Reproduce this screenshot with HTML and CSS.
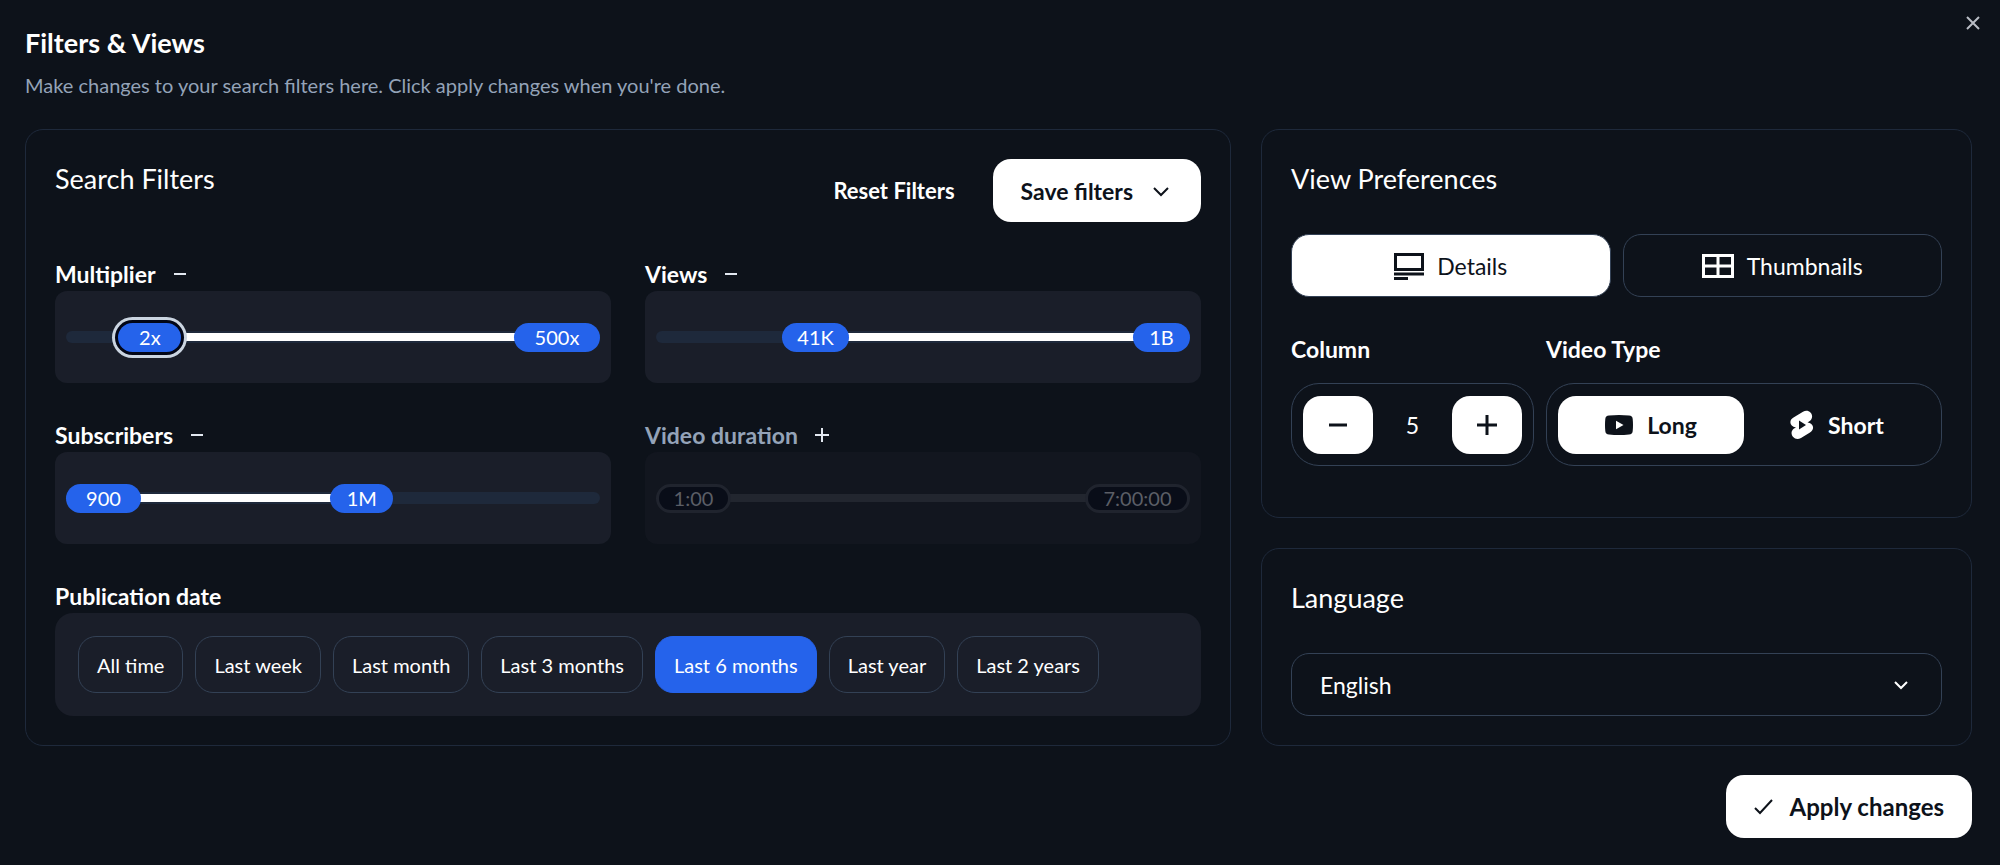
FILE: index.html
```html
<!DOCTYPE html>
<html lang="en">
<head>
<meta charset="utf-8">
<meta name="viewport" content="width=device-width, initial-scale=1">
<title>Filters &amp; Views</title>
<link rel="stylesheet" href="styles.css">
</head>
<body>
<main class="dialog">
  <button class="close" type="button" aria-label="Close">
    <svg viewBox="0 0 14 14" width="14" height="14" fill="none" stroke="currentColor" stroke-width="2"><path d="M1 1l12 12M13 1L1 13"/></svg>
  </button>

  <header class="dialog-header">
    <h1 class="title">Filters &amp; Views</h1>
    <p class="description">Make changes to your search filters here. Click apply changes when you're done.</p>
  </header>

  <div class="columns">
    <section class="card">
      <div class="card-top">
        <h2 class="card-title">Search Filters</h2>
        <div class="actions">
          <button class="btn btn-ghost" type="button">Reset Filters</button>
          <button class="btn btn-solid" type="button">Save filters
            <svg viewBox="0 0 24 24" width="24" height="24" fill="none" stroke="currentColor" stroke-width="2"><path d="M5 9l7 7 7-7"/></svg>
          </button>
        </div>
      </div>

      <div class="filters">
        <div class="filter">
          <div class="filter-head"><h3 class="label">Multiplier</h3>
            <button class="toggle" type="button" aria-label="Disable multiplier"><svg viewBox="0 0 14 14" width="14" height="14" stroke="currentColor" stroke-width="2"><path d="M1 7h12"/></svg></button></div>
          <div class="panel"><div class="slider">
            <span class="range" style="left:15%;right:8%"></span>
            <output class="thumb w-xs focused" style="left:9.8%">2x</output>
            <output class="thumb w-lg" style="right:0">500x</output>
            <input class="native" type="range" aria-label="Minimum multiplier"><input class="native" type="range" aria-label="Maximum multiplier">
          </div></div>
        </div>

        <div class="filter">
          <div class="filter-head"><h3 class="label">Views</h3>
            <button class="toggle" type="button" aria-label="Disable views"><svg viewBox="0 0 14 14" width="14" height="14" stroke="currentColor" stroke-width="2"><path d="M1 7h12"/></svg></button></div>
          <div class="panel"><div class="slider">
            <span class="range" style="left:30%;right:6%"></span>
            <output class="thumb w-sm" style="left:23.6%">41K</output>
            <output class="thumb w-xxs" style="right:0">1B</output>
            <input class="native" type="range" aria-label="Minimum views"><input class="native" type="range" aria-label="Maximum views">
          </div></div>
        </div>

        <div class="filter">
          <div class="filter-head"><h3 class="label">Subscribers</h3>
            <button class="toggle" type="button" aria-label="Disable subscribers"><svg viewBox="0 0 14 14" width="14" height="14" stroke="currentColor" stroke-width="2"><path d="M1 7h12"/></svg></button></div>
          <div class="panel"><div class="slider">
            <span class="range" style="left:7%;right:44%"></span>
            <output class="thumb w-md" style="left:0">900</output>
            <output class="thumb w-xs" style="left:49.5%">1M</output>
            <input class="native" type="range" aria-label="Minimum subscribers"><input class="native" type="range" aria-label="Maximum subscribers">
          </div></div>
        </div>

        <div class="filter is-off">
          <div class="filter-head"><h3 class="label">Video duration</h3>
            <button class="toggle" type="button" aria-label="Enable video duration"><svg viewBox="0 0 14 14" width="14" height="14" stroke="currentColor" stroke-width="2"><path d="M0 7h14M7 0v14"/></svg></button></div>
          <div class="panel"><div class="slider">
            <span class="range" style="left:7%;right:10%"></span>
            <output class="thumb w-md" style="left:0">1:00</output>
            <output class="thumb w-xl" style="right:0">7:00:00</output>
            <input class="native" type="range" aria-label="Minimum duration" disabled><input class="native" type="range" aria-label="Maximum duration" disabled>
          </div></div>
        </div>
      </div>

      <div class="dates">
        <div class="filter-head"><h3 class="label">Publication date</h3></div>
        <div class="chips">
          <button class="chip" type="button">All time</button>
          <button class="chip" type="button">Last week</button>
          <button class="chip" type="button">Last month</button>
          <button class="chip" type="button">Last 3 months</button>
          <button class="chip chip-active" type="button" aria-pressed="true">Last 6 months</button>
          <button class="chip" type="button">Last year</button>
          <button class="chip" type="button">Last 2 years</button>
        </div>
      </div>
    </section>

    <div class="side">
      <section class="card card-view">
        <h2 class="card-title">View Preferences</h2>
        <div class="modes">
          <button class="mode mode-active" type="button" aria-pressed="true">
            <svg viewBox="0 0 30 28" width="30" height="28" fill="none" stroke="currentColor" stroke-width="3"><path d="M1.500 2.500h27v15h-27zM0 22h30M0 26.500h14"/></svg>
            Details
          </button>
          <button class="mode" type="button">
            <svg viewBox="0 0 32 24" width="32" height="24" fill="none" stroke="currentColor" stroke-width="3"><path d="M1.500 1.500h29v21h-29zM16 1.500v21M1.500 12h29"/></svg>
            Thumbnails
          </button>
        </div>
        <div class="options">
          <div class="option">
            <h3 class="label" id="col-label">Column</h3>
            <div class="box stepper" role="group" aria-labelledby="col-label">
              <button class="step" type="button" aria-label="Fewer columns"><svg viewBox="0 0 20 20" width="20" height="20" stroke="currentColor" stroke-width="3"><path d="M1 10h18"/></svg></button>
              <output class="count">5</output>
              <button class="step" type="button" aria-label="More columns"><svg viewBox="0 0 20 20" width="20" height="20" stroke="currentColor" stroke-width="3"><path d="M0 10h20M10 0v20"/></svg></button>
            </div>
          </div>
          <div class="option">
            <h3 class="label" id="type-label">Video Type</h3>
            <div class="box types" role="group" aria-labelledby="type-label">
              <button class="type type-active" type="button" aria-pressed="true">
                <svg viewBox="0 0 28 20" width="28" height="20"><path fill="currentColor" fill-rule="evenodd" d="M4 .5Q14-.5 24 .5q3.500.3 3.700 3.500.6 6 0 12-.2 3.200-3.700 3.500-10 1-20 0-3.500-.3-3.700-3.500-.6-6 0-12Q.5.800 4 .5zM11 5.800v8.400l7.500-4.200z"/></svg>
                Long
              </button>
              <button class="type" type="button">
                <svg viewBox="0 0 24 30" width="24" height="30"><path fill="currentColor" fill-rule="evenodd" d="M13 1.700C20-2 26 7 19 11.500L17.500 12.500C25 14 24 20 20 22.500L11 28C4 32 -2 23 4 18.500L6 17.500C-1 16-1 10 3.500 7.500zM9 10.500v9l7-4.500z"/></svg>
                Short
              </button>
            </div>
          </div>
        </div>
      </section>

      <section class="card">
        <h2 class="card-title"><label for="language">Language</label></h2>
        <div class="select-wrap">
          <select class="select" id="language"><option>English</option></select>
          <svg class="select-arrow" viewBox="0 0 24 24" width="24" height="24" fill="none" stroke="currentColor" stroke-width="2"><path d="M6 9l6 6 6-6"/></svg>
        </div>
      </section>
    </div>
  </div>

  <footer class="dialog-footer">
    <button class="btn btn-solid btn-apply" type="button">
      <svg viewBox="0 0 20 20" width="20" height="20" fill="none" stroke="currentColor" stroke-width="2"><path d="M1 11l5 5L18 3"/></svg>
      Apply changes
    </button>
  </footer>
</main>
</body>
</html>
```

FILE: styles.css
```css
* { box-sizing: border-box; }

body {
  margin: 0;
  background: #0d121a;
  color: #fff;
  font-family: Lato, "Open Sans", sans-serif;
  font-size: 22px;
  line-height: 28px;
}

h1, h2, h3, p { margin: 0; }

button, select {
  font: inherit;
  color: inherit;
  background: none;
  border: 0;
  padding: 0;
  cursor: pointer;
}

svg { display: block; flex: none; }

.dialog { position: relative; padding: 24px 28px 27px 25px; }

.close { position: absolute; top: 16px; right: 20px; color: #b9bdc5; }

.dialog-header { margin-bottom: 29px; }
.title { font-size: 27px; line-height: 38px; font-weight: 700; }
.description { margin-top: 9px; font-size: 20px; line-height: 29px; color: #94a3b8; }

.columns { display: grid; grid-template-columns: minmax(0, 1206fr) minmax(0, 711fr); gap: 30px; }
.side { display: flex; flex-direction: column; gap: 30px; }

.card { border: 1px solid #1e293b; border-radius: 18px; padding: 29px; }
.card-view { flex: 1; }
.card-top { display: flex; justify-content: space-between; }
.card-title { font-size: 27px; line-height: 40px; font-weight: 400; }

.actions { display: flex; gap: 10px; }
.btn {
  display: flex;
  align-items: center;
  justify-content: center;
  height: 63px;
  padding: 0 28px;
  border-radius: 18px;
  font-size: 23px;
  font-weight: 700;
}
.btn-ghost { font-size: 22px; }
.btn-solid { background: #fff; color: #0d121a; gap: 16px; }

.filters { display: grid; grid-template-columns: 1fr 1fr; gap: 34px; margin-top: 34px; }
.filter-head { display: flex; align-items: center; gap: 17px; height: 35px; }
.label { font-size: 23px; line-height: 28px; font-weight: 700; }
.toggle { padding: 4px 0; color: #e2e8f0; }

.panel { height: 92px; padding: 40px 11px; border-radius: 12px; background: #1a1e29; }
.slider { position: relative; height: 12px; border-radius: 6px; background: #1e293b; }
.range { position: absolute; top: 2px; bottom: 2px; background: #fff; }
.thumb {
  position: absolute;
  top: -8px;
  height: 29px;
  border-radius: 15px;
  background: #2563eb;
  font-size: 20px;
  line-height: 28px;
  text-align: center;
}
.w-xxs { width: 57px; }
.w-xs { width: 63px; }
.w-sm { width: 67px; }
.w-md { width: 75px; }
.w-lg { width: 86px; }
.w-xl { width: 105px; }
.focused { box-shadow: 0 0 0 3px #020617, 0 0 0 6px #cbd5e1; }
.native { position: absolute; inset: 0; width: 100%; margin: 0; opacity: 0; }

.is-off .label { color: #94a3b8; }
.is-off .panel { background: #12161f; }
.is-off .slider { background: none; }
.is-off .range { background: #22262f; }
.is-off .thumb { background: #090d18; border: 3px solid #20242e; line-height: 22px; color: #5b5e66; }

.dates { margin-top: 34px; }
.chips { display: flex; flex-wrap: wrap; gap: 12px; padding: 23px; border-radius: 18px; background: #1a1e29; }
.chip {
  height: 57px;
  padding: 0 18px;
  border: 1px solid #334155;
  border-radius: 18px;
  font-size: 20px;
}
.chip-active { background: #2563eb; border-color: #2563eb; }

.modes { display: grid; grid-template-columns: 1fr 1fr; gap: 12px; margin-top: 35px; }
.mode {
  display: flex;
  align-items: center;
  justify-content: center;
  gap: 13px;
  height: 63px;
  border: 1px solid #334155;
  border-radius: 18px;
  font-size: 23px;
}
.mode-active { background: #fff; color: #0d121a; }

.options { display: grid; grid-template-columns: 243fr 396fr; gap: 12px; margin-top: 38px; }
.box {
  display: flex;
  align-items: center;
  height: 83px;
  margin-top: 20px;
  padding: 11px;
  border: 1px solid #334155;
  border-radius: 28px;
}
.stepper { justify-content: space-between; }
.step {
  display: grid;
  place-items: center;
  width: 70px;
  height: 58px;
  border-radius: 18px;
  background: #fff;
  color: #0d121a;
}
.count { font-size: 23px; }
.type {
  display: flex;
  flex: 1;
  align-items: center;
  justify-content: center;
  gap: 14px;
  height: 58px;
  border-radius: 18px;
  font-size: 23px;
  font-weight: 700;
}
.type-active { background: #fff; color: #0d121a; }

.select-wrap { position: relative; margin-top: 35px; }
.select {
  appearance: none;
  display: block;
  width: 100%;
  height: 63px;
  padding: 0 28px;
  border: 1px solid #334155;
  border-radius: 18px;
  font-size: 23px;
}
.select-arrow { position: absolute; top: 20px; right: 29px; pointer-events: none; }

.dialog-footer { display: flex; justify-content: flex-end; margin-top: 29px; }
.btn-apply { font-size: 24px; }
```
